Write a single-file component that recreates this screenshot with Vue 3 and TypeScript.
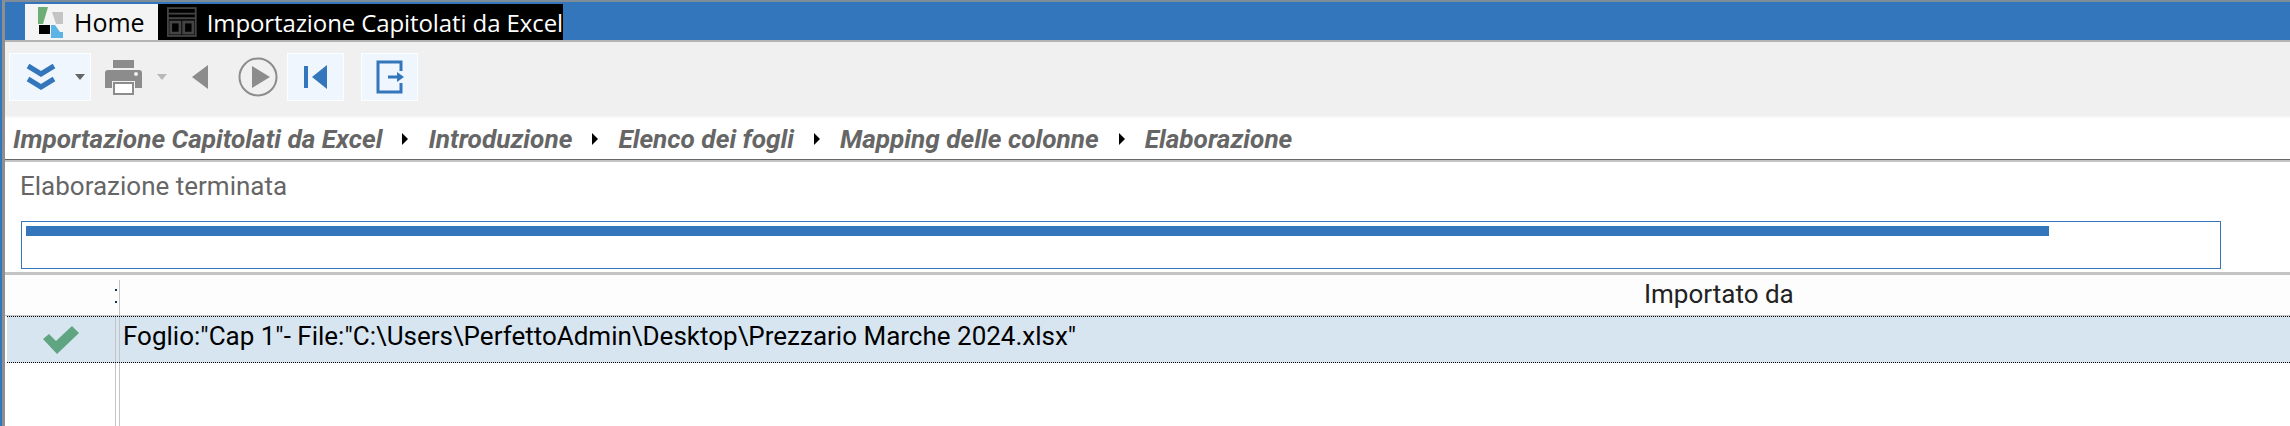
<script setup lang="ts">
const crumbs = [
  'Importazione Capitolati da Excel',
  'Introduzione',
  'Elenco dei fogli',
  'Mapping delle colonne',
  'Elaborazione',
];
const progress = 2023;
</script>

<template>
  <div class="app-window">
    <div class="frame">
      <div class="tabbar">
        <div class="tab tab-home">
          <svg class="tab-logo" width="25" height="31" viewBox="0 0 25 31">
            <polygon points="0,0 10,0 5,17 0,17" fill="#6cae75" />
            <polygon points="14,5 25,5 25,17 18,17" fill="#c4c4c4" />
            <rect x="1" y="18" width="11" height="9" fill="#000" />
            <polygon points="13,18 17,18 22,25 25,25 25,31 13,31" fill="#5bb4e5" />
          </svg>
          <span class="home-label">Home</span>
        </div>
        <div class="tab tab-active">
          <svg class="tab-icon" width="32" height="32" viewBox="0 0 32 32">
            <rect x="1" y="1" width="30" height="30" fill="none" stroke="#444" stroke-width="2" />
            <path d="M1 7H31M1 12H31" stroke="#444" stroke-width="2" />
            <rect x="4" y="16" width="10" height="12" fill="none" stroke="#444" stroke-width="3" />
            <rect x="18" y="16" width="10" height="12" fill="none" stroke="#444" stroke-width="3" />
          </svg>
          <span>Importazione Capitolati da Excel</span>
        </div>
      </div>

      <div class="toolbar">
        <div class="tool tool-menu">
          <svg width="30" height="28" viewBox="0 0 30 28">
            <path d="M2 3L15 11L28 3M2 16L15 24L28 16" fill="none" stroke="#3376bb" stroke-width="5" />
          </svg>
          <i class="caret caret-dark"></i>
        </div>
        <div class="tool-plain tool-print">
          <svg width="37" height="36" viewBox="0 0 37 36">
            <rect x="8" y="1" width="21" height="8" fill="#8c8c8c" />
            <path d="M0 14Q0 11 3 11H34Q37 11 37 14V29H30V22H7V29H0Z" fill="#8c8c8c" />
            <circle cx="31" cy="15" r="2" fill="#eee" />
            <rect x="9" y="24" width="19" height="11" fill="#fff" stroke="#8c8c8c" stroke-width="2" />
          </svg>
          <i class="caret caret-light"></i>
        </div>
        <div class="tool-plain tool-back">
          <svg width="16" height="24" viewBox="0 0 16 24"><polygon points="16,0 16,24 0,12" fill="#8c8c8c" /></svg>
        </div>
        <div class="tool-plain tool-play">
          <svg width="40" height="40" viewBox="0 0 40 40">
            <circle cx="20" cy="20" r="18.5" fill="none" stroke="#8c8c8c" stroke-width="2" />
            <polygon points="14,9 14,31 32,20" fill="#8c8c8c" />
          </svg>
        </div>
        <div class="tool tool-first">
          <svg width="24" height="24" viewBox="0 0 24 24">
            <rect x="0" y="1" width="4" height="22" fill="#3376bb" />
            <polygon points="23,0 23,24 8,12" fill="#3376bb" />
          </svg>
        </div>
        <div class="tool tool-exit">
          <svg width="28" height="34" viewBox="0 0 28 34">
            <path d="M25 11V2H2V32H25V23" fill="none" stroke="#3376bb" stroke-width="3" />
            <path d="M12 17H22" stroke="#3376bb" stroke-width="3" />
            <polygon points="21,12 21,22 28,17" fill="#3376bb" />
          </svg>
        </div>
      </div>

      <div class="breadcrumb">
        <template v-for="(crumb, i) in crumbs" :key="crumb">
          <span class="crumb">{{ crumb }}</span>
          <i v-if="i < crumbs.length - 1" class="crumb-arrow"></i>
        </template>
      </div>

      <div class="status">Elaborazione terminata</div>

      <div class="progress">
        <div class="progress-bar" :style="{ width: progress + 'px' }"></div>
      </div>

      <div class="grid">
        <div class="grid-head">
          <div class="head-check"><i></i><i></i></div>
          <div class="head-title">Importato da</div>
        </div>
        <div class="grid-row">
          <div class="cell-check">
            <svg width="36" height="28" viewBox="0 0 36 28">
              <polygon points="0,13 6,8 13,15 29,0 36,7 14,28" fill="#5fa582" />
            </svg>
          </div>
          <div class="cell-text">Foglio:"Cap 1"- File:"C:\Users\PerfettoAdmin\Desktop\Prezzario Marche 2024.xlsx"</div>
        </div>
        <div class="grid-rest"></div>
      </div>
    </div>
  </div>
</template>

<style scoped>
.app-window {
  width: 2290px;
  height: 426px;
  box-sizing: border-box;
  overflow: hidden;
  background: #fff;
  border-left: 2px solid #3376bb;
  font-family: Roboto, "Liberation Sans", sans-serif;
  color: #000;
}
.frame {
  height: 100%;
  box-sizing: border-box;
  display: flex;
  flex-direction: column;
  border-left: 3px solid #8f8f8f;
  border-top: 2px solid #7f8c99;
}

.tabbar {
  height: 38px;
  flex: none;
  box-sizing: border-box;
  padding: 2px 0 0 20px;
  display: flex;
  background: #3376bb;
  font-family: "Open Sans", Roboto, sans-serif;
  font-size: 24px;
  white-space: nowrap;
}
.tab {
  display: flex;
  align-items: center;
  height: 36px;
  box-sizing: border-box;
}
.tab-home {
  width: 133px;
  padding-left: 13px;
  gap: 11px;
  background: #f4f4f4;
}
.home-label {
  font-size: 25px;
}
.tab-active {
  width: 405px;
  padding-left: 9px;
  gap: 10px;
  background: #000;
  color: #fff;
  letter-spacing: -0.1px;
}

.toolbar {
  height: 78px;
  flex: none;
  box-sizing: border-box;
  padding: 11px 0 0 4px;
  display: flex;
  align-items: flex-start;
  background: #f0f0f0;
  border-top: 2px solid #b4b4b4;
  border-bottom: 2px solid #f8f8f8;
}
.tool {
  height: 48px;
  box-sizing: border-box;
  display: flex;
  align-items: center;
  justify-content: center;
  background: #eff6fd;
  border: 1px solid #fbfdff;
}
.tool-plain {
  height: 48px;
  display: flex;
  align-items: center;
}
.tool-menu {
  width: 82px;
  justify-content: flex-start;
  padding-left: 16px;
  gap: 19px;
}
.tool-print {
  margin-left: 14px;
  gap: 15px;
}
.tool-back {
  margin-left: 25px;
}
.tool-play {
  margin-left: 30px;
}
.tool-first {
  width: 57px;
  margin-left: 9px;
}
.tool-exit {
  width: 57px;
  margin-left: 17px;
}
.caret {
  width: 0;
  height: 0;
  border-left: 5px solid transparent;
  border-right: 5px solid transparent;
  border-top: 6px solid #666;
}
.caret-light {
  border-top-color: #b8b8b8;
}

.breadcrumb {
  height: 42px;
  flex: none;
  box-sizing: border-box;
  padding-left: 8px;
  display: flex;
  align-items: center;
  background: #fff;
  border-bottom: 1px solid #666;
}
.crumb {
  font-size: 26.2px;
  font-weight: 700;
  font-style: italic;
  color: #666;
  white-space: nowrap;
}
.crumb-arrow {
  width: 0;
  height: 0;
  margin: 0 20px 0 20px;
  border-top: 6px solid transparent;
  border-bottom: 6px solid transparent;
  border-left: 6px solid #000;
}

.status {
  height: 61px;
  flex: none;
  box-sizing: border-box;
  padding: 9px 0 0 15px;
  font-size: 26px;
  line-height: 30px;
  color: #666;
  border-top: 2px solid #c4c4c4;
}

.progress {
  width: 2200px;
  height: 48px;
  flex: none;
  margin-left: 16px;
  box-sizing: border-box;
  padding: 4px;
  border: 1px solid #3376bb;
}
.progress-bar {
  height: 10px;
  background: #3376bb;
}

.grid {
  flex: 1;
  display: flex;
  flex-direction: column;
  margin-top: 3px;
  border-top: 3px solid #c4c4c4;
}
.grid-head {
  height: 41px;
  flex: none;
  box-sizing: border-box;
  display: flex;
  background: #fdfdfd;
  border-bottom: 1px solid #c4c4c4;
}
.head-check {
  width: 115px;
  flex: none;
  box-sizing: border-box;
  margin-top: 5px;
  border-right: 1px solid #c4c4c4;
  display: flex;
  flex-direction: column;
  align-items: flex-end;
  padding: 9px 2px 0 0;
  gap: 10px;
}
.head-check i {
  width: 2px;
  height: 2px;
  background: #10305c;
}
.head-title {
  padding: 0 0 0 1524px;
  font-size: 26px;
  line-height: 38px;
  color: #222;
}
.grid-row {
  height: 47px;
  flex: none;
  display: flex;
  box-sizing: border-box;
  margin-left: 2px;
  background: #d7e5f1;
  border-top: 1px dotted #000;
  border-bottom: 1px dotted #000;
}
.cell-check {
  width: 109px;
  flex: none;
  box-sizing: border-box;
  display: flex;
  align-items: center;
  justify-content: center;
  border-right: 1px solid #c4c4c4;
}
.cell-text {
  box-sizing: border-box;
  padding-left: 3px;
  font-size: 26px;
  line-height: 38px;
  white-space: nowrap;
  margin-left: 3px;
  border-left: 1px solid #c4c4c4;
}
.grid-rest {
  flex: none;
  height: 100%;
  margin-left: 110px;
  width: 5px;
  box-sizing: border-box;
  border-left: 1px solid #c4c4c4;
  border-right: 1px solid #c4c4c4;
}
</style>
